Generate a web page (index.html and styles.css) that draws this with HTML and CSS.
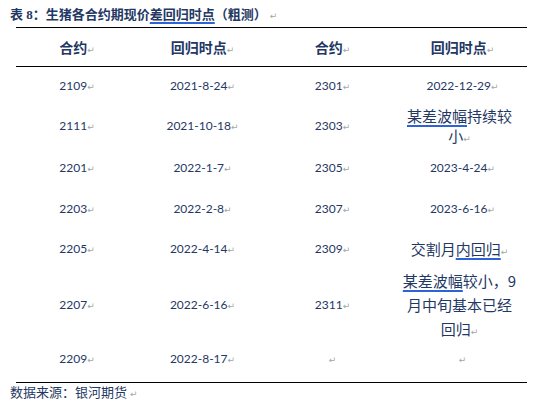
FILE: index.html
```html
<!DOCTYPE html>
<html lang="zh">
<head>
    <meta charset="UTF-8">
    <title>生猪各合约期现价差回归时点</title>
    <link rel="stylesheet" href="styles.css">
</head>
<body>
    <div class="caption">表 8：生猪各合约期现价<span class="mark">差回归时点</span>（粗测）<span class="pm">↵</span></div>

    <table class="tbl">
        <thead>
            <tr>
                <th>合约<span class="pm">↵</span></th>
                <th>回归时点<span class="pm">↵</span></th>
                <th>合约<span class="pm">↵</span></th>
                <th>回归时点<span class="pm">↵</span></th>
            </tr>
        </thead>
        <tbody>
            <tr>
                <td>2109<span class="pm">↵</span></td>
                <td>2021-8-24<span class="pm">↵</span></td>
                <td>2301<span class="pm">↵</span></td>
                <td>2022-12-29<span class="pm">↵</span></td>
            </tr>
            <tr>
                <td>2111<span class="pm">↵</span></td>
                <td>2021-10-18<span class="pm">↵</span></td>
                <td>2303<span class="pm">↵</span></td>
                <td class="cn"><span class="mark">某差波幅</span>持续较<br>小<span class="pm">↵</span></td>
            </tr>
            <tr>
                <td>2201<span class="pm">↵</span></td>
                <td>2022-1-7<span class="pm">↵</span></td>
                <td>2305<span class="pm">↵</span></td>
                <td>2023-4-24<span class="pm">↵</span></td>
            </tr>
            <tr>
                <td>2203<span class="pm">↵</span></td>
                <td>2022-2-8<span class="pm">↵</span></td>
                <td>2307<span class="pm">↵</span></td>
                <td>2023-6-16<span class="pm">↵</span></td>
            </tr>
            <tr>
                <td>2205<span class="pm">↵</span></td>
                <td>2022-4-14<span class="pm">↵</span></td>
                <td>2309<span class="pm">↵</span></td>
                <td class="cn">交割月<span class="mark">内回归</span><span class="pm">↵</span></td>
            </tr>
            <tr>
                <td>2207<span class="pm">↵</span></td>
                <td>2022-6-16<span class="pm">↵</span></td>
                <td>2311<span class="pm">↵</span></td>
                <td class="cn"><span class="mark">某差波幅</span>较小，9<br>月中旬基本已经<br>回归<span class="pm">↵</span></td>
            </tr>
            <tr>
                <td>2209<span class="pm">↵</span></td>
                <td>2022-8-17<span class="pm">↵</span></td>
                <td><span class="pm">↵</span></td>
                <td><span class="pm">↵</span></td>
            </tr>
        </tbody>
    </table>

    <div class="source">数据来源：银河期货 <span class="pm">↵</span></div>
</body>
</html>
```

FILE: styles.css
```css
body {
    margin: 0;
    padding: 6px 0 0 10px;
    background: #fff;
    color: #1f3864;
    font-family: Lato, "Noto Sans CJK SC", sans-serif;
    width: 530px;
}
.caption {
    font-family: "Liberation Serif", "Noto Sans CJK SC", serif;
    font-weight: bold;
    font-size: 13px;
    line-height: 17px;
    color: #1f3864;
    height: 21px;
}
.mark {
    text-decoration: underline;
    text-decoration-color: #2f62d6;
    text-decoration-thickness: 1.5px;
    text-underline-offset: 3px;
}
.pm {
    color: #a6a6a6;
    font-family: "DejaVu Sans", sans-serif;
    font-size: 9px;
    font-weight: normal;
    line-height: 0;
    text-decoration: none;
}
.caption .pm {
    margin-left: 3px;
}
.tbl {
    margin-left: 6px;
    width: 511px;
    border-collapse: collapse;
    table-layout: fixed;
}
.tbl th,
.tbl td {
    box-sizing: border-box;
    padding: 0 4px;
    text-align: center;
    vertical-align: middle;
}
.tbl th:nth-child(1) { width: 122px; }
.tbl th:nth-child(2) { width: 129px; }
.tbl th:nth-child(3) { width: 131px; }
.tbl th:nth-child(4) { width: 129px; }
.tbl thead tr {
    border-top: 1px solid #000;
    border-bottom: 1px solid #000;
}
.tbl th {
    height: 39px;
    font-family: "Noto Sans CJK SC", sans-serif;
    font-size: 14px;
    font-weight: bold;
    color: #1f3864;
}
.tbl tbody tr:last-child {
    border-bottom: 1px solid #000;
}
.tbl td {
    height: 40px;
    font-size: 12px;
    line-height: 20px;
}
.tbl tbody tr:nth-child(1) td { height: 38px; }
.tbl tbody tr:nth-child(2) td { height: 43px; }
.tbl tbody tr:nth-child(3) td { height: 41px; }
.tbl tbody tr:nth-child(4) td { height: 41px; }
.tbl tbody tr:nth-child(5) td { height: 38px; }
.tbl tbody tr:nth-child(6) td { height: 74px; }
.tbl tbody tr:nth-child(7) td { height: 41px; padding-bottom: 6px; }
.tbl td.cn {
    font-family: "Noto Sans CJK SC", sans-serif;
    font-size: 15px;
    line-height: 24px;
    padding-right: 10px;
}
.tbl tbody tr:nth-child(2) td.cn {
    line-height: 20px;
}
.source {
    font-family: "Noto Sans CJK SC", sans-serif;
    font-size: 13px;
    line-height: 18px;
    color: #1f3864;
}
```
